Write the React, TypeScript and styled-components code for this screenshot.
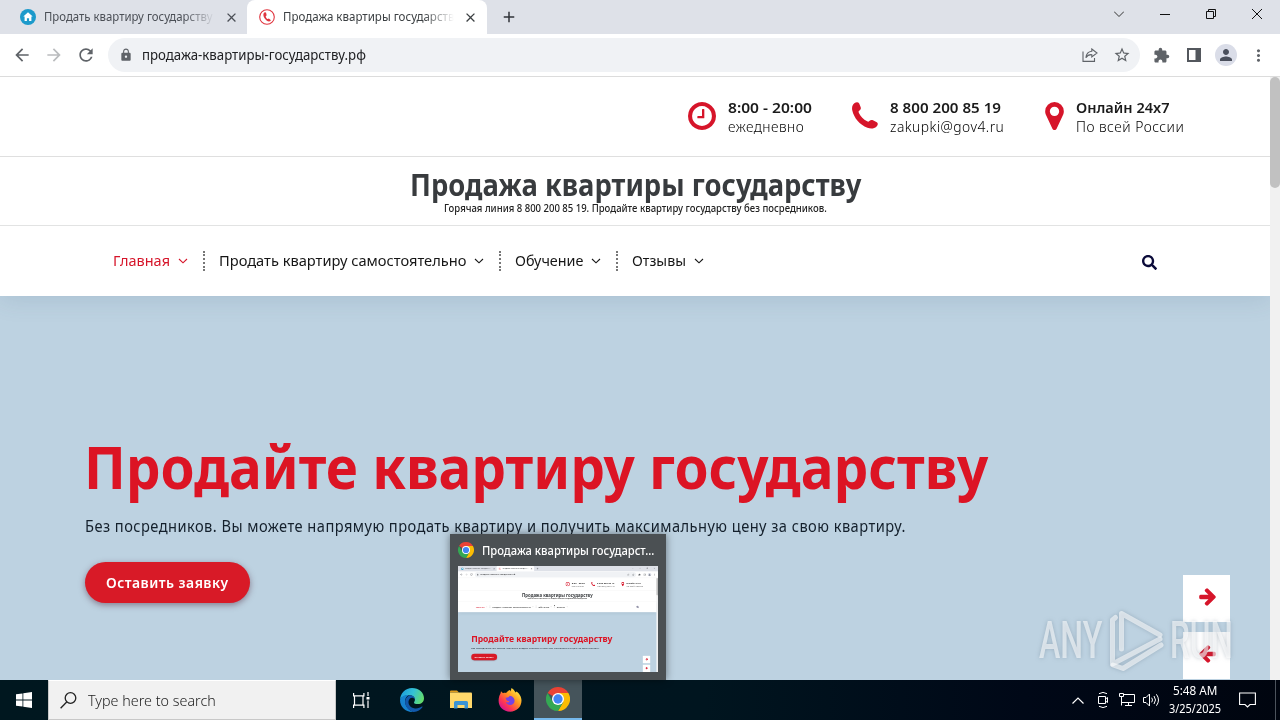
import React, { useLayoutEffect, useRef, useState } from 'react';
import styled, { createGlobalStyle, css } from 'styled-components';
import {
  MdArrowBack,
  MdArrowForward,
  MdRefresh,
  MdLock,
  MdStarBorder,
  MdExtension,
  MdPerson,
  MdMoreVert,
  MdClose,
  MdAdd,
} from 'react-icons/md';
import { FaSearch } from 'react-icons/fa';

const GlobalStyle = createGlobalStyle`
  * {
    box-sizing: border-box;
  }

  body {
    margin: 0;
    overflow: hidden;
    font-family: 'Noto Sans', 'Open Sans', sans-serif;
  }
`;

const Screen = styled.div`
  position: relative;
  display: flex;
  flex-direction: column;
  width: 1280px;
  height: 720px;
  overflow: hidden;
`;

/* ---------- text that keeps a fixed measure ---------- */

const Measure = styled.span<{ $width: number }>`
  display: block;
  width: ${(p) => p.$width}px;
  white-space: nowrap;
`;

const Run = styled.span<{ $spacing: number }>`
  display: inline-block;
  letter-spacing: ${(p) => p.$spacing}px;
  transform-origin: 0 50%;
`;

interface FitProps {
  width: number;
  spacing?: number;
  children: string;
}

const Fit: React.FC<FitProps> = ({ width, spacing = 0, children }) => {
  const ref = useRef<HTMLSpanElement>(null);
  const [scale, setScale] = useState(1);

  useLayoutEffect(() => {
    if (ref.current) setScale(width / (ref.current.offsetWidth - spacing));
  }, [width, spacing, children]);

  return (
    <Measure $width={width}>
      <Run ref={ref} $spacing={spacing} style={{ transform: `scaleX(${scale})` }}>
        {children}
      </Run>
    </Measure>
  );
};

/* ---------- browser chrome ---------- */

const Browser = styled.div`
  display: flex;
  flex-direction: column;
  width: 1280px;
  height: 680px;
  background: #fff;
`;

const TabStrip = styled.div`
  display: flex;
  height: 34px;
  background: #dee1e8;
`;

const Tab = styled.div<{ $active?: boolean }>`
  display: flex;
  align-items: center;
  width: ${(p) => (p.$active ? 240 : 247)}px;
  padding: 0 8px 0 ${(p) => (p.$active ? 12 : 20)}px;
  border-radius: 8px 8px 0 0;
  color: ${(p) => (p.$active ? '#3c4043' : '#4b4f56')};
  background: ${(p) => (p.$active ? '#fff' : 'transparent')};
  font-size: 12px;

  svg {
    flex: none;
  }
`;

const TabTitle = styled.div`
  width: 171px;
  height: 18px;
  margin: 0 9px 0 8px;
  overflow: hidden;
  line-height: 18px;
  mask-image: linear-gradient(90deg, #000 82%, transparent);
`;

const NewTab = styled.div`
  display: flex;
  align-items: center;
  padding-left: 13px;
  color: #303338;
`;

const WindowButtons = styled.div`
  display: flex;
  align-items: center;
  margin-left: auto;
  padding: 0 18px 6px 0;
  gap: 36px;
`;

const Toolbar = styled.div`
  display: flex;
  align-items: center;
  height: 43px;
  padding: 0 12px;
  border-bottom: 1px solid #dcdcdc;
  color: #5f6368;
`;

const NavButtons = styled.div`
  display: flex;
  gap: 12px;
  width: 96px;
`;

const AddressBar = styled.div`
  display: flex;
  align-items: center;
  width: 1032px;
  height: 34px;
  padding: 0 9px 0 11px;
  border-radius: 17px;
  background: #f0f2f5;
  color: #202124;
  font-size: 14px;
`;

const Url = styled.div`
  flex: 1;
  padding: 0 0 1px 9px;
`;

const AddressActions = styled.div`
  display: flex;
  align-items: center;
  gap: 15px;
  color: #5f6368;
`;

const ToolbarActions = styled.div`
  display: flex;
  align-items: center;
  gap: 12px;
  margin-left: 13px;
`;

const PanelToggle = styled.div`
  display: flex;
  padding: 0 2px 0 5px;
`;

const Avatar = styled.div`
  display: flex;
  align-items: center;
  justify-content: center;
  width: 22px;
  height: 22px;
  border-radius: 50%;
  background: #dadde8;
  color: #4a4f5c;
`;

const Viewport = styled.div`
  display: flex;
  flex: 1;
  min-height: 0;
`;

const Scrollbar = styled.div`
  width: 10px;
  background: #f1f1f1;
`;

const ScrollThumb = styled.div`
  height: 111px;
  border-radius: 5px;
  background: #c1c1c1;
`;

/* ---------- page ---------- */

const Page = styled.div`
  display: flex;
  flex-direction: column;
  width: 1270px;
`;

const ContactBar = styled.div`
  display: flex;
  justify-content: flex-end;
  height: 80px;
  padding: 21px 86px 0 0;
  border-bottom: 1px solid #dfdfdf;
`;

const Contact = styled.div<{ $gap?: number }>`
  display: flex;
  margin-left: ${(p) => p.$gap ?? 0}px;

  svg {
    fill: #d6152a;
  }
`;

const ContactIcon = styled.div<{ $width: number }>`
  display: flex;
  width: ${(p) => p.$width}px;
  padding-top: 4px;
`;

const ContactTitle = styled.div`
  color: #1b1b1b;
  font-size: 15px;
  font-weight: 600;
  line-height: 19px;
`;

const ContactText = styled.div`
  color: #000;
  font-size: 14.5px;
  font-weight: 300;
  line-height: 18px;
`;

const Brand = styled.div`
  display: flex;
  flex-direction: column;
  align-items: center;
  height: 69px;
  border-bottom: 1px solid #e2e3e3;
  color: #383b3e;
`;

const BrandName = styled.div`
  margin-top: 11px;
  font-size: 30.5px;
  font-weight: 700;
  line-height: 33px;
`;

const BrandLine = styled.div`
  font-size: 10px;
  font-weight: 500;
  line-height: 14px;
  color: #222;
`;

const NavBar = styled.nav`
  display: flex;
  align-items: center;
  height: 70px;
  padding: 0 113px;
  box-shadow: 0 4px 24px rgba(60, 90, 120, 0.14);
  clip-path: inset(0 0 -40px 0);
  z-index: 1;
`;

const NavItem = styled.div<{ $active?: boolean; $divided?: boolean }>`
  display: flex;
  align-items: center;
  gap: 8px;
  height: 20px;
  color: ${(p) => (p.$active ? '#d6152a' : '#161616')};
  font-size: 15px;
  line-height: 20px;

  > span {
    padding-bottom: 2px;
  }

  ${(p) =>
    p.$divided &&
    css`
      margin-left: 15px;
      padding-left: 14px;
      border-left: 2px dotted #777;
    `}
`;

const NavSearch = styled.div`
  display: flex;
  margin-left: auto;
  padding-top: 3px;
  color: #0b0b3a;
`;

const Hero = styled.div`
  position: relative;
  flex: 1;
  padding: 132px 85px 0;
  background: #bdd2e1;
`;

const HeroTitle = styled.h1`
  margin: 0 0 0 -1px;
  color: #dc1424;
  font-size: 60px;
  font-weight: 700;
  line-height: 76px;
`;

const HeroText = styled.p`
  margin: 10px 0 24px;
  color: #14202c;
  font-size: 16px;
  line-height: 24px;
`;

const HeroButton = styled.div`
  display: flex;
  align-items: center;
  justify-content: center;
  width: 165px;
  height: 41px;
  padding: 0 2px 2px 0;
  border-radius: 21px;
  background: #d81a27;
  box-shadow: 0 2px 6px rgba(80, 40, 60, 0.5);
  color: #fff;
  font-size: 15px;
  font-weight: 600;
`;

const SliderArrows = styled.div`
  position: absolute;
  top: 279px;
  right: 40px;
  display: flex;
  flex-direction: column;
  gap: 10px;
`;

const SliderArrow = styled.div<{ $back?: boolean }>`
  display: flex;
  align-items: center;
  justify-content: center;
  width: 47px;
  height: 47px;
  padding: 0 0 3px 1px;
  background: #fff;

  svg {
    fill: #d6152a;
    transform: ${(p) => (p.$back ? 'scaleX(-1)' : 'none')};
  }
`;

/* ---------- taskbar ---------- */

const Taskbar = styled.div`
  display: flex;
  align-items: center;
  height: 40px;
  background: linear-gradient(90deg, #00171f 0%, #00151f 55%, #000817 80%, #00050f 100%);
  color: #fff;
`;

const StartButton = styled.div`
  display: flex;
  justify-content: center;
  width: 48px;
`;

const SearchBox = styled.div`
  display: flex;
  align-items: center;
  gap: 11px;
  width: 288px;
  height: 40px;
  padding-left: 11px;
  border: 1px solid #c8c8c8;
  border-top-color: #fff;
  background: #f1f1f1;
  color: #222;
  font-size: 15px;
  font-weight: 300;
`;

const TaskButton = styled.div<{ $width?: number; $active?: boolean }>`
  display: flex;
  align-items: center;
  justify-content: center;
  width: ${(p) => p.$width ?? 49}px;
  height: 40px;
  background: ${(p) => (p.$active ? '#45545b' : 'transparent')};
  border-bottom: ${(p) => (p.$active ? '2px solid #76b9ed' : '0')};
`;

const Tray = styled.div`
  display: flex;
  align-items: center;
  gap: 8px;
  height: 40px;
  margin-left: auto;
`;

const TrayToggle = styled.div`
  display: flex;
  margin-right: 3px;
`;

const Clock = styled.div`
  display: flex;
  flex-direction: column;
  align-items: center;
  width: 54px;
  margin-right: 9px;
  font-size: 12px;
  line-height: 18px;
`;

const ShowDesktop = styled.div`
  width: 5px;
  height: 40px;
  margin-left: 11px;
  border-left: 1px solid #4c535c;
`;

/* ---------- floating layers ---------- */

const Preview = styled.div`
  position: absolute;
  left: 450px;
  top: 534px;
  z-index: 2;
  width: 216px;
  height: 146px;
  padding: 0 8px;
  background: #4b5053;
  box-shadow: 0 0 8px rgba(0, 0, 0, 0.45);
`;

const PreviewTitle = styled.div`
  display: flex;
  align-items: center;
  gap: 8px;
  height: 32px;
  color: #fff;
  font-size: 12px;
  font-weight: 500;
`;

const PreviewFrame = styled.div`
  width: 200px;
  height: 106px;
  overflow: hidden;
`;

const PreviewScale = styled.div`
  width: 1280px;
  transform: scale(0.15625);
  transform-origin: 0 0;
`;

const Watermark = styled.div`
  position: absolute;
  left: 1039px;
  top: 608px;
  z-index: 3;
  display: flex;
  align-items: center;
  gap: 6px;
  height: 66px;
  color: rgba(255, 255, 255, 0.58);
  font-family: Roboto, sans-serif;
  font-size: 52px;
  font-weight: 500;
  line-height: 66px;
  filter: drop-shadow(0 0 2px rgba(80, 100, 120, 0.55));
`;

/* ---------- icons ---------- */

const ChromeLogo = ({ size = 24 }: { size?: number }) => (
  <svg width={size} height={size} viewBox="0 0 48 48">
    <path d="M24 24 3.2 12A24 24 0 0 1 44.8 12H24z" fill="#ea4335" />
    <path d="M44.8 12A24 24 0 0 1 24 48L34.4 30 24 12z" fill="#fbbc04" />
    <path d="M24 48A24 24 0 0 1 3.2 12L13.6 30 24 24 34.4 30z" fill="#34a853" />
    <circle cx="24" cy="24" r="12" fill="#fff" />
    <circle cx="24" cy="24" r="9.3" fill="#4285f4" />
  </svg>
);

const HomeFavicon = () => (
  <svg width="16" height="16" viewBox="0 0 16 16">
    <circle cx="8" cy="8" r="8" fill="#1c9acb" />
    <path d="M8 3.2 3.3 7.6h1.3V12h2.3V9.2h2.2V12h2.3V7.6h1.3z" fill="#fff" />
  </svg>
);

const PhoneFavicon = () => (
  <svg width="16" height="16" viewBox="0 0 16 16">
    <circle cx="8" cy="8" r="7.3" fill="#fff" stroke="#e0353f" strokeWidth="1.1" />
    <path
      d="M5.7 3.2c-1.8 1-1.7 3.6-.3 5.8 1.4 2.3 3.6 3.9 5.6 3.3l.9-1.1-2-1.7-1.2.6c-.9-.4-1.9-1.8-2-2.9l1-.9-.7-2.8z"
      fill="#e0353f"
    />
  </svg>
);

const ClockIcon = () => (
  <svg width="28" height="28" viewBox="0 128 1536 1536">
    <path d="M896 544v448q0 14-9 23t-23 9h-320q-14 0-23-9t-9-23v-64q0-14 9-23t23-9h224v-352q0-14 9-23t23-9h64q14 0 23 9t9 23zm416 352q0-148-73-273t-198-198-273-73-273 73-198 198-73 273 73 273 198 198 273 73 273-73 198-198 73-273zm224 0q0 209-103 385.5t-279.5 279.5-385.5 103-385.5-103-279.5-279.5-103-385.5 103-385.5 279.5-279.5 385.5-103 385.5 103 279.5 279.5 103 385.5z" />
  </svg>
);

const PhoneIcon = () => (
  <svg width="26" height="27" viewBox="0 0 26 27">
    <path d="M2.3 1.3C4.2-.3 6.2-.2 7.2 1.4l1.5 3.9c.4 1.5 0 2.5-1.6 3.5-.7.6-.6 1.3-.2 2.2 1.7 3.6 4.5 6.4 8.2 8.3.9.5 1.5.5 2.2-.2 1.3-1.3 2.3-1.5 3.7-.9l3.8 2c1.4 1 1.3 2.7-.2 4.2-2.500 2.300-5.600 2.600-9.200 1.300C7.700 23 1.900 15.900.3 8.600-.4 5.400.4 2.800 2.300 1.300z" />
  </svg>
);

const PinIcon = () => (
  <svg width="19" height="28" viewBox="0 128 1024 1536">
    <path d="M768 640q0-106-75-181t-181-75-181 75-75 181 75 181 181 75 181-75 75-181zm256 0q0 109-33 179l-364 774q-16 33-47.5 52t-67.5 19-67.5-19-46.5-52l-365-774q-33-70-33-179 0-212 150-362t362-150 362 150 150 362z" />
  </svg>
);

const ArrowIcon = () => (
  <svg width="17" height="18" viewBox="0 160 1472 1600">
    <path d="M1472 960q0 54-37 91l-651 651q-39 37-91 37-51 0-90-37l-75-75q-38-38-38-91t38-91l293-293h-704q-52 0-84.5-37.5t-32.5-90.5v-128q0-53 32.5-90.5t84.5-37.5h704l-293-294q-38-36-38-90t38-90l75-75q38-38 90-38 53 0 91 38l651 651q37 35 37 90z" />
  </svg>
);

const Caret = () => (
  <svg width="10" height="6" viewBox="0 0 10 6">
    <path d="M1 1l4 3.8L9 1" fill="none" stroke="currentColor" strokeWidth="1.1" />
  </svg>
);

const ShareIcon = () => (
  <svg width="16" height="14" viewBox="0 0 16 14" fill="none" stroke="currentColor" strokeWidth="1.1">
    <path d="M1 3.5v9.9h11.5v-3.4" />
    <path d="M9.8 1l5.2 4-5.2 4V6.7C7.3 6.5 5.2 7.5 3.9 9.8 4.2 6.3 6.3 3.7 9.8 3.3z" />
  </svg>
);

const SidePanelIcon = () => (
  <svg width="14" height="14" viewBox="0 0 14 14">
    <path d="M0 0h14v14H0zM2 2v10h6.5V2z" fill="#53575d" fillRule="evenodd" />
  </svg>
);

const EdgeLogo = () => (
  <svg width="24" height="24" viewBox="0 0 24 24">
    <defs>
      <linearGradient id="edgeTop" x1="0" x2="1" y1="0.3" y2="0.6">
        <stop offset="0" stopColor="#1c9ddb" />
        <stop offset="0.5" stopColor="#34c2d6" />
        <stop offset="1" stopColor="#65dd68" />
      </linearGradient>
    </defs>
    <path d="M0 12C.3 5 5.3 0 12 0c7 0 12 4.6 12 10.2 0 3.7-2.7 5.9-6 5.9-2.6 0-4-.8-4-1.7 0-.7.9-1 .9-2.7 0-2.5-2.4-4.5-5.4-4.5C5 7.2 1 9.2 0 12z" fill="url(#edgeTop)" />
    <path d="M0 12c1-3.1 4.5-5.3 8.6-4.9-2.5 1.4-3.7 4-3.5 6.9.3 4.2 3.5 8.3 8.4 9.9C6 24.6 0 19.2 0 12z" fill="#1682cf" />
    <path d="M9.7 10.7c-2.9 3.5-.4 8.6 4.3 9.6 3.3.7 6.1-.6 7.8-1.7.5-.3 1 .2.6.7-1.7 2.7-5 4.7-8.9 4.6C8.3 22.4 5 18.3 5.1 14 5.2 9 9.4 7.3 10.9 7.3c2.3.2 4 2 4 4-1-1.7-3.6-2.2-5.2-.6z" fill="#1259ab" />
  </svg>
);

const FolderLogo = () => (
  <svg width="22" height="20" viewBox="0 0 22 20">
    <path d="M0 1.500Q0 .5 1 .5h6l2 2H0z" fill="#e09c1c" />
    <path d="M0 2.500h21q1 0 1 1V18H0z" fill="#ffd86b" />
    <path d="M4 18.500v-6q0-1.500 1.500-1.500h11q1.500 0 1.500 1.500v6h-3.500V15h-7v3.500z" fill="#3b94d5" />
  </svg>
);

const FirefoxLogo = () => (
  <svg width="24" height="24" viewBox="0 0 24 24">
    <defs>
      <linearGradient id="foxBody" x1="0.9" x2="0.2" y1="0.1" y2="0.9">
        <stop offset="0" stopColor="#fff04a" />
        <stop offset="0.4" stopColor="#ff9a1f" />
        <stop offset="0.75" stopColor="#ff3a4f" />
        <stop offset="1" stopColor="#d9158c" />
      </linearGradient>
    </defs>
    <path d="M2.5 5.5 3 3.2l2 2C6.3 4.700 7 4.800 8 5c2-2.500 4-3 4-3l.6 1.500L13.500 0c2.800 1.500 3.700 4 3.900 4.500l1.200-1c2.400 1.800 4.900 5 4.900 9C23.500 19 18.500 23.700 12 23.700S.6 19 .6 12.800c0-3 .7-5.600 1.900-7.300z" fill="url(#foxBody)" />
    <path d="M7.500 9.700c2 .1 3.500-.2 4.200-1.900 3 .3 4.900 2.400 4.900 5 0 2.400-2 4.300-4.400 4.300-2 0-3.800-1.200-4.400-3 1.500.8 3 .5 3.800-.8-2.100.1-3.500-1.300-4.100-3.600z" fill="#7542e5" />
  </svg>
);

const TaskViewIcon = () => (
  <svg width="17" height="17" viewBox="0 0 17 17" fill="none" stroke="#fff" strokeWidth="1.2">
    <path d="M.6 1v2.900h10.300V1M.6 16v-2.900h10.300V16M1.500 4v9M10 4v9M15 0v4M15 8.500V16" />
    <path d="M13.500 5h3v2.500h-3z" fill="#fff" stroke="none" />
  </svg>
);

const AnyRunMark = () => (
  <svg
    width="56"
    height="66"
    viewBox="0 0 56 66"
    fill="none"
    stroke="rgba(255,255,255,0.58)"
    strokeWidth="5"
    strokeLinejoin="round"
    strokeLinecap="round"
  >
    <path d="M13.5 41V5.5L52 27" />
    <path d="M7.5 9.5 4.5 12v44L52 31" />
    <path d="M5 57l10 3.500L53 37" />
  </svg>
);

/* ---------- composition ---------- */

const navItems = [
  { label: 'Главная', width: 57 },
  { label: 'Продать квартиру самостоятельно', width: 247 },
  { label: 'Обучение', width: 68 },
  { label: 'Отзывы', width: 54 },
];

const BrowserWindow = () => (
  <Browser>
    <TabStrip>
      <Tab>
        <HomeFavicon />
        <TabTitle>
          <Fit width={169}>Продать квартиру государству</Fit>
        </TabTitle>
        <MdClose size={15} />
      </Tab>
      <Tab $active>
        <PhoneFavicon />
        <TabTitle>
          <Fit width={177}>Продажа квартиры государству</Fit>
        </TabTitle>
        <MdClose size={15} />
      </Tab>
      <NewTab>
        <MdAdd size={18} />
      </NewTab>
      <WindowButtons>
        <svg width="10" height="6" viewBox="0 0 10 6" fill="none" stroke="#333">
          <path d="M0 .5l5 5 5-5" />
        </svg>
        <svg width="10" height="10" viewBox="0 0 10 10" stroke="#111">
          <path d="M0 5.500h10" />
        </svg>
        <svg width="10" height="10" viewBox="0 0 10 10" fill="none" stroke="#111">
          <path d="M.5 2.500h7v7h-7zM2.500 2.500v-2h7v7h-2" />
        </svg>
        <svg width="10" height="10" viewBox="0 0 10 10" stroke="#111">
          <path d="M0 0l10 10M10 0L0 10" />
        </svg>
      </WindowButtons>
    </TabStrip>
    <Toolbar>
      <NavButtons>
        <MdArrowBack size={20} />
        <MdArrowForward size={20} color="#babcbe" />
        <MdRefresh size={20} />
      </NavButtons>
      <AddressBar>
        <MdLock size={14} color="#5f6368" />
        <Url>
          <Fit width={224}>продажа-квартиры-государству.рф</Fit>
        </Url>
        <AddressActions>
          <ShareIcon />
          <MdStarBorder size={18} />
        </AddressActions>
      </AddressBar>
      <ToolbarActions>
        <MdExtension size={17} />
        <PanelToggle>
          <SidePanelIcon />
        </PanelToggle>
        <Avatar>
          <MdPerson size={18} />
        </Avatar>
        <MdMoreVert size={19} />
      </ToolbarActions>
    </Toolbar>
    <Viewport>
      <Page>
        <ContactBar>
          <Contact>
            <ContactIcon $width={40}>
              <ClockIcon />
            </ContactIcon>
            <div>
              <ContactTitle>
                <Fit width={84}>8:00 - 20:00</Fit>
              </ContactTitle>
              <ContactText>
                <Fit width={76} spacing={0.5}>ежедневно</Fit>
              </ContactText>
            </div>
          </Contact>
          <Contact $gap={40}>
            <ContactIcon $width={38}>
              <PhoneIcon />
            </ContactIcon>
            <div>
              <ContactTitle>
                <Fit width={111}>8 800 200 85 19</Fit>
              </ContactTitle>
              <ContactText>
                <Fit width={114} spacing={0.5}>zakupki@gov4.ru</Fit>
              </ContactText>
            </div>
          </Contact>
          <Contact $gap={41}>
            <ContactIcon $width={31}>
              <PinIcon />
            </ContactIcon>
            <div>
              <ContactTitle>
                <Fit width={93}>Онлайн 24x7</Fit>
              </ContactTitle>
              <ContactText>
                <Fit width={108} spacing={0.5}>По всей России</Fit>
              </ContactText>
            </div>
          </Contact>
        </ContactBar>
        <Brand>
          <BrandName>
            <Fit width={451}>Продажа квартиры государству</Fit>
          </BrandName>
          <BrandLine>
            <Fit width={383}>Горячая линия 8 800 200 85 19. Продайте квартиру государству без посредников.</Fit>
          </BrandLine>
        </Brand>
        <NavBar>
          {navItems.map((item, i) => (
            <NavItem key={item.label} $active={i === 0} $divided={i > 0}>
              <Fit width={item.width}>{item.label}</Fit>
              <Caret />
            </NavItem>
          ))}
          <NavSearch>
            <FaSearch size={15} />
          </NavSearch>
        </NavBar>
        <Hero>
          <HeroTitle>
            <Fit width={904}>Продайте квартиру государству</Fit>
          </HeroTitle>
          <HeroText>
            <Fit width={820} spacing={0.5}>
              Без посредников. Вы можете напрямую продать квартиру и получить максимальную цену за свою квартиру.
            </Fit>
          </HeroText>
          <HeroButton>
            <Fit width={122} spacing={0.5}>Оставить заявку</Fit>
          </HeroButton>
          <SliderArrows>
            <SliderArrow>
              <ArrowIcon />
            </SliderArrow>
            <SliderArrow $back>
              <ArrowIcon />
            </SliderArrow>
          </SliderArrows>
        </Hero>
      </Page>
      <Scrollbar>
        <ScrollThumb />
      </Scrollbar>
    </Viewport>
  </Browser>
);

const App: React.FC = () => (
  <>
    <GlobalStyle />
    <Screen>
      <BrowserWindow />
      <Taskbar>
        <StartButton>
          <svg width="16" height="16" viewBox="0 0 16 16" fill="#fff">
            <path d="M0 2.300l6.500-.9v6.200H0zM7.300 1.300L16 0v7.600H7.300zM0 8.400h6.500v6.200L0 13.700zM7.300 8.400H16V16l-8.700-1.300z" />
          </svg>
        </StartButton>
        <SearchBox>
          <svg width="17" height="17" viewBox="0 0 17 17" fill="none" stroke="#222" strokeWidth="1.3">
            <circle cx="10.5" cy="6" r="5.3" />
            <path d="M6.700 10L.6 16.300" />
          </svg>
          <Fit width={128}>Type here to search</Fit>
        </SearchBox>
        <TaskButton $width={51}>
          <TaskViewIcon />
        </TaskButton>
        <TaskButton>
          <EdgeLogo />
        </TaskButton>
        <TaskButton>
          <FolderLogo />
        </TaskButton>
        <TaskButton>
          <FirefoxLogo />
        </TaskButton>
        <TaskButton $width={48} $active>
          <ChromeLogo />
        </TaskButton>
        <Tray>
          <TrayToggle>
            <svg width="12" height="7" viewBox="0 0 12 7" fill="none" stroke="#fff" strokeWidth="1.2">
              <path d="M.5 6.500L6 1l5.500 5.500" />
            </svg>
          </TrayToggle>
          <svg width="16" height="18" viewBox="0 0 16 18" fill="none" stroke="#fff">
            <path d="M3.500 5.500h7v7h-7zM10.500 8l2-1.500v5l-2-1.500M4 2.700q4-2.600 8 0M4 15.300q4 2.600 8 0" />
          </svg>
          <svg width="16" height="14" viewBox="0 0 16 14" fill="none" stroke="#fff">
            <path d="M5 1.500h10.500v8H2.500M.5.500h4v3h-4zM2.500 3.500v9M9.500 9.500v3M6 12.500h7" />
          </svg>
          <svg width="17" height="14" viewBox="0 0 17 14" fill="none" stroke="#fff">
            <path d="M.5 4.500H3L6.500 1v12L3 9.500H.5zM8.700 4.700q1.600 2.300 0 4.600M11 3q3 4 0 8M13.400 1.300q4.200 5.700 0 11.400" />
          </svg>
          <Clock>
            <Fit width={44}>5:48 AM</Fit>
            <Fit width={52}>3/25/2025</Fit>
          </Clock>
          <svg width="17" height="17" viewBox="0 0 17 17" fill="none" stroke="#fff" strokeWidth="1.1">
            <path d="M.6 1h15.800v11.500H11L8.500 15 6 12.500H.6z" />
          </svg>
          <ShowDesktop />
        </Tray>
      </Taskbar>
      <Preview>
        <PreviewTitle>
          <ChromeLogo size={16} />
          <Fit width={172}>Продажа квартиры государст...</Fit>
        </PreviewTitle>
        <PreviewFrame>
          <PreviewScale>
            <BrowserWindow />
          </PreviewScale>
        </PreviewFrame>
      </Preview>
      <Watermark>
        <Fit width={63}>ANY</Fit>
        <AnyRunMark />
        <Fit width={63}>RUN</Fit>
      </Watermark>
    </Screen>
  </>
);

export default App;
